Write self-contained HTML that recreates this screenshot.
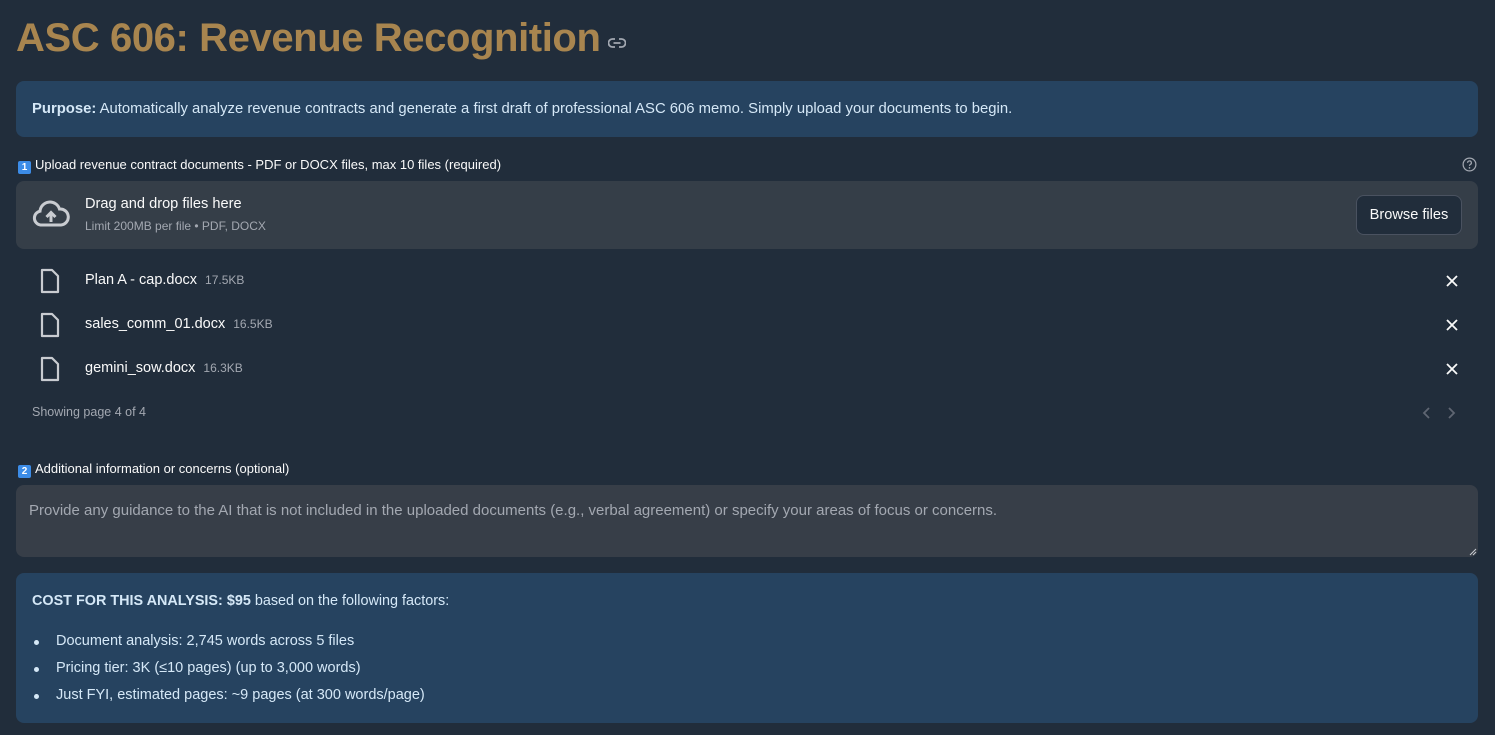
<!DOCTYPE html>
<html><head><meta charset="utf-8"><style>
*{box-sizing:border-box;margin:0;padding:0}
body{width:1495px;height:735px;background:#212d3b;font-family:"Liberation Sans",sans-serif;color:#fafafa;position:relative;overflow:hidden}
.a{position:absolute}
h1{position:absolute;left:16px;top:16px;font-size:40px;font-weight:bold;color:#a8854f;letter-spacing:-0.4px;white-space:nowrap}
h1 svg{margin-left:8px;vertical-align:2px}
.box{position:absolute;left:16px;width:1462px;border-radius:8px}
.info{background:#264360;color:#d5e8f7}
.lbl{font-size:13px;color:#fafafa;white-space:nowrap}
.num{display:inline-block;width:13px;height:13px;background:#3c8ce7;border-radius:2px;color:#fff;font-size:10px;text-align:center;line-height:13px;font-weight:bold;vertical-align:-1px;margin-right:4px}
.fn{font-size:14.5px;color:#fafafa;white-space:nowrap}
.fn span{font-size:12px;color:#a3a8b1;margin-left:8px}
ul li{list-style:none;position:relative;padding-left:24px;font-size:14.5px;line-height:27px}
ul li:before{content:"";position:absolute;left:2px;top:12px;width:5px;height:5px;border-radius:50%;background:#d5e8f7}
</style></head><body>
<h1>ASC 606: Revenue Recognition<svg width="18" height="12" viewBox="0 0 18 12"><path d="M7 2H4.5a4 4 0 0 0 0 8H7M11 2h2.5a4 4 0 0 1 0 8H11M5.5 6h7" stroke="#a3a8b1" stroke-width="1.8" fill="none"/></svg></h1>

<div class="box info" style="top:81px;height:56px;padding:20px 16px;font-size:14.85px;white-space:nowrap"><b>Purpose:</b> Automatically analyze revenue contracts and generate a first draft of professional ASC 606 memo. Simply upload your documents to begin.</div>

<div class="a lbl" style="left:18px;top:157px"><span class="num">1</span>Upload revenue contract documents - PDF or DOCX files, max 10 files (required)</div>
<svg class="a" style="left:1462px;top:157px" width="15" height="15" viewBox="0 0 16 16"><circle cx="8" cy="8" r="6.8" stroke="#a3a8b1" stroke-width="1.3" fill="none"/><path d="M6 6.2a2 2 0 1 1 2.8 1.8c-.6.3-.8.7-.8 1.4" stroke="#a3a8b1" stroke-width="1.3" fill="none"/><circle cx="8" cy="11.6" r=".9" fill="#a3a8b1"/></svg>

<div class="box" style="top:181px;height:68px;background:#353e48"></div>
<svg class="a" style="left:32px;top:200px" width="38" height="28" viewBox="0 0 38 28"><path d="M10 25H8.5A7 7 0 0 1 8 11.2 10 10 0 0 1 27.5 9 8 8 0 0 1 29 25H10Z" stroke="#c9ccd1" stroke-width="3" fill="none"/><path d="M19 22v-8M14.5 17l4.5-4.5 4.5 4.5" stroke="#c9ccd1" stroke-width="3" fill="none"/></svg>
<div class="a" style="left:85px;top:196px;font-size:14.6px">Drag and drop files here</div>
<div class="a" style="left:85px;top:219px;font-size:12px;color:#a3a8b1">Limit 200MB per file • PDF, DOCX</div>
<div class="a" style="left:1356px;top:195px;width:106px;height:40px;border:1px solid #4a5260;border-radius:8px;background:#212d3b;font-size:14.6px;text-align:center;line-height:38px">Browse files</div>

<svg class="a" style="left:40px;top:268px" width="20" height="26" viewBox="0 0 20 26"><path d="M2 2h10l6 6v16H2Z" stroke="#c9ccd1" stroke-width="2.2" fill="none" stroke-linejoin="round"/></svg>
<div class="a fn" style="left:85px;top:272px">Plan A - cap.docx<span>17.5KB</span></div>
<svg class="a" style="left:40px;top:312px" width="20" height="26" viewBox="0 0 20 26"><path d="M2 2h10l6 6v16H2Z" stroke="#c9ccd1" stroke-width="2.2" fill="none" stroke-linejoin="round"/></svg>
<div class="a fn" style="left:85px;top:316px">sales_comm_01.docx<span>16.5KB</span></div>
<svg class="a" style="left:40px;top:356px" width="20" height="26" viewBox="0 0 20 26"><path d="M2 2h10l6 6v16H2Z" stroke="#c9ccd1" stroke-width="2.2" fill="none" stroke-linejoin="round"/></svg>
<div class="a fn" style="left:85px;top:360px">gemini_sow.docx<span>16.3KB</span></div>
<svg class="a" style="left:1446px;top:275px" width="12" height="12"><path d="M1 1l10 10M11 1L1 11" stroke="#fafafa" stroke-width="1.8"/></svg>
<svg class="a" style="left:1446px;top:319px" width="12" height="12"><path d="M1 1l10 10M11 1L1 11" stroke="#fafafa" stroke-width="1.8"/></svg>
<svg class="a" style="left:1446px;top:363px" width="12" height="12"><path d="M1 1l10 10M11 1L1 11" stroke="#fafafa" stroke-width="1.8"/></svg>
<div class="a" style="left:32px;top:405px;font-size:12.5px;color:#a3a8b1">Showing page 4 of 4</div>
<svg class="a" style="left:1421px;top:406px" width="40" height="14"><path d="M8 2L3 7l5 5M28 2l5 5-5 5" stroke="#5f6672" stroke-width="1.8" fill="none"/></svg>

<div class="a lbl" style="left:18px;top:461px"><span class="num">2</span>Additional information or concerns (optional)</div>
<div class="box" style="top:485px;height:72px;background:#373e48;padding:17px 13px;font-size:15px;color:#a3a8b1;white-space:nowrap">Provide any guidance to the AI that is not included in the uploaded documents (e.g., verbal agreement) or specify your areas of focus or concerns.</div>
<svg class="a" style="left:1469px;top:548px" width="8" height="8"><path d="M7 1L1 7M7 4L4 7" stroke="#c9ccd1" stroke-width="1"/></svg>

<div class="box info" style="top:573px;height:150px;padding:20px 16px">
<div style="font-size:14.4px;white-space:nowrap"><b>COST FOR THIS ANALYSIS: $95</b> based on the following factors:</div>
<ul style="margin-top:19px">
<li>Document analysis: 2,745 words across 5 files</li>
<li>Pricing tier: 3K (≤10 pages) (up to 3,000 words)</li>
<li>Just FYI, estimated pages: ~9 pages (at 300 words/page)</li>
</ul></div>
</body></html>
